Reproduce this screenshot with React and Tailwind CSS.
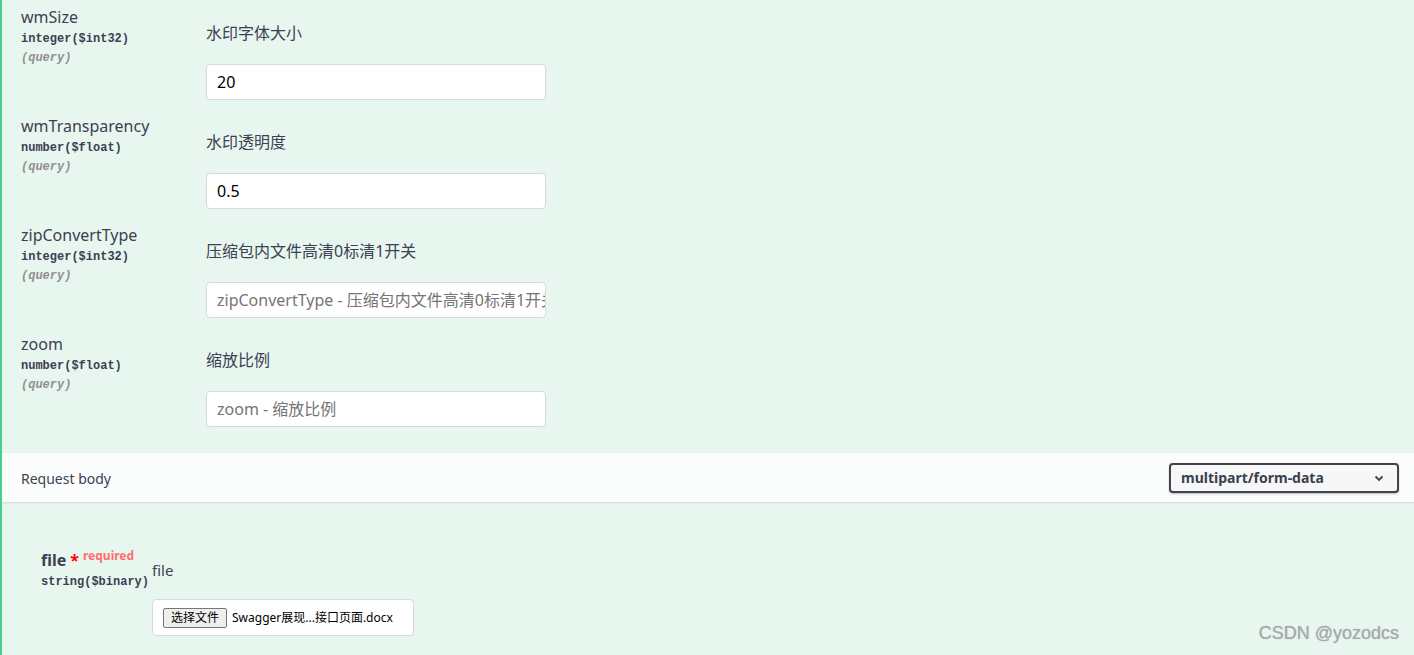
import React from 'react'

const params = [
  { name: 'wmSize', type: 'integer($int32)', desc: '水印字体大小', value: '20' },
  { name: 'wmTransparency', type: 'number($float)', desc: '水印透明度', value: '0.5' },
  { name: 'zipConvertType', type: 'integer($int32)', desc: '压缩包内文件高清0标清1开关', placeholder: 'zipConvertType - 压缩包内文件高清0标清1开关' },
  { name: 'zoom', type: 'number($float)', desc: '缩放比例', placeholder: 'zoom - 缩放比例' },
]

const sans = "font-['Microsoft_YaHei','Noto_Sans','Noto_Sans_CJK_SC',sans-serif]"
const mono = "font-['Liberation_Mono','Noto_Sans_CJK_SC',monospace]"

function ParamRow({ p }) {
  return (
    <div className="flex h-[109px]">
      <div className="w-[204px] shrink-0 pl-[19px] pt-[7px]">
        <div className={`text-[16px] leading-[20px] text-[#3b4151] ${sans}`}>{p.name}</div>
        <div className={`mt-[3px] text-[12px] leading-[18px] font-bold text-[#3b4151] ${mono}`}>{p.type}</div>
        <div className={`mt-[1px] text-[12px] leading-[18px] font-bold italic text-[#909090] ${mono}`}>(query)</div>
      </div>
      <div className="pt-[23px]">
        <p className={`text-[16px] leading-[20px] text-[#3b4151] ${sans}`}>{p.desc}</p>
        <div className={`mt-[21px] flex h-[36px] w-[340px] items-center overflow-hidden whitespace-nowrap rounded-[4px] border border-[#d9d9d9] bg-white pl-[10px] text-[16px] ${sans}`}>
          {p.value ? <span className="text-black">{p.value}</span> : <span className="text-[#757575]">{p.placeholder}</span>}
        </div>
      </div>
    </div>
  )
}

export default function App() {
  return (
    <div className="relative h-[655px] w-[1414px] overflow-hidden border-l-2 border-[#49cc90] bg-[#e8f6f0]">
      <div>
        {params.map(p => <ParamRow key={p.name} p={p} />)}
      </div>

      <div className="mt-[17px] flex h-[49px] items-center justify-between bg-[#fbfdfc] pl-[19px] pr-[15px] shadow-[0_1px_2px_rgba(0,0,0,0.12)]">
        <span className={`pt-[2px] text-[14px] text-[#3b4151] ${sans}`}>Request body</span>
        <div className={`flex h-[30px] w-[230px] items-center justify-between rounded-[4px] border-2 border-[#41444e] bg-[#f7f7f7] pl-[10px] pr-[12px] text-[14px] font-bold text-[#3b4151] shadow-[0_1px_2px_rgba(0,0,0,0.25)] ${sans}`}>
          <span>multipart/form-data</span>
          <svg width="12" height="12" viewBox="0 0 12 12" fill="none" stroke="#3b4151" strokeWidth="1.8">
            <path d="M2.5 4.5 6 8l3.5-3.5" />
          </svg>
        </div>
      </div>

      <div className="flex pl-[39px] pt-[47px]">
        <div className="w-[111px] shrink-0">
          <div className={`flex items-start text-[16px] leading-[22px] font-bold text-[#3b4151] ${sans}`}>
            <span>file</span>
            <span className="ml-[4px] text-[#ff0000]">*</span>
            <span className="relative -top-[4px] ml-[4px] text-[12px] text-[#ff6f6f]">required</span>
          </div>
          <div className={`mt-[2px] text-[12px] leading-[18px] font-bold text-[#3b4151] ${mono}`}>string($binary)</div>
        </div>
        <div className="pt-[11px]">
          <p className={`text-[15px] leading-[20px] text-[#3b4151] ${sans}`}>file</p>
          <div className={`mt-[19px] flex h-[37px] w-[262px] items-center rounded-[4px] border border-[#d9d9d9] bg-white pl-[10px] ${sans}`}>
            <span className="flex h-[20px] items-center rounded-[2px] border border-[#767676] bg-[#efefef] px-[7px] text-[12px] text-black">选择文件</span>
            <span className="ml-[5px] text-[12px] text-black">Swagger展现...接口页面.docx</span>
          </div>
        </div>
      </div>

      <div className="absolute bottom-[8px] right-[15px] font-['Liberation_Sans',Arial,sans-serif] text-[18px] text-[#a9a9a9] [text-shadow:0_0_1px_rgba(0,0,0,0.25)]">
        CSDN @yozodcs
      </div>
    </div>
  )
}
